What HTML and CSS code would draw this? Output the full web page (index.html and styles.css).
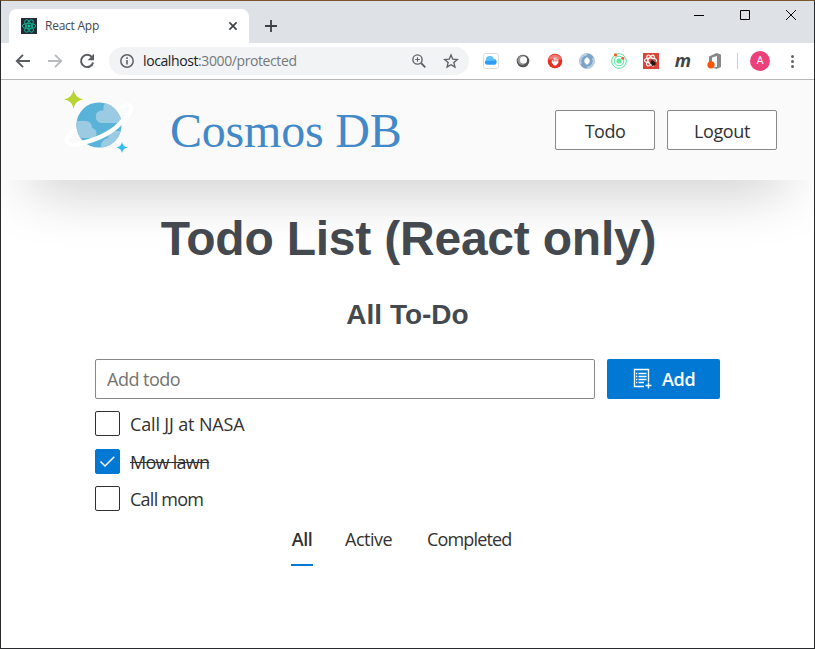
FILE: index.html
```
<!DOCTYPE html>
<html lang="en">
<head>
<meta charset="utf-8">
<title>React App</title>
<link rel="stylesheet" href="styles.css">
</head>
<body>
<div class="window">
  <div class="tabstrip">
    <div class="tab">
      <svg class="favicon" width="16" height="16" viewBox="0 0 16 16"><rect width="16" height="16" fill="#272b38"/><g fill="none" stroke="#0fae8c" stroke-width="1"><ellipse cx="8" cy="8" rx="6.8" ry="2.7"/><ellipse cx="8" cy="8" rx="6.8" ry="2.7" transform="rotate(60 8 8)"/><ellipse cx="8" cy="8" rx="6.8" ry="2.7" transform="rotate(120 8 8)"/></g><circle cx="8" cy="8" r="1.5" fill="#13c99f"/></svg>
      <span class="tab-title">React App</span>
      <svg class="tab-close" width="8" height="8" viewBox="0 0 8 8"><path d="M.4.4 7.6 7.6M7.6.4.4 7.6" stroke="#3c4043" stroke-width="1.6"/></svg>
    </div>
    <svg class="plus" width="12" height="12" viewBox="0 0 12 12"><path d="M6 0v12M0 6h12" stroke="#3c4043" stroke-width="1.8"/></svg>
    <div class="controls">
      <svg width="10" height="10" viewBox="0 0 10 10"><path d="M0 5.5h10" stroke="#000"/></svg>
      <svg width="10" height="10" viewBox="0 0 10 10"><path d="M.5.5h9v9h-9z" fill="none" stroke="#000"/></svg>
      <svg width="10" height="10" viewBox="0 0 10 10"><path d="M0 0 10 10M10 0 0 10" stroke="#000"/></svg>
    </div>
  </div>
  <div class="toolbar">
    <div class="nav">
      <svg width="16" height="16" viewBox="0 0 16 16"><path d="M15 8H2.5M8 1.8 1.8 8 8 14.2" fill="none" stroke="#5a5d61" stroke-width="1.9"/></svg>
      <svg width="16" height="16" viewBox="0 0 16 16"><path d="M1 8h12.5M8 1.8 14.2 8 8 14.2" fill="none" stroke="#b9bbbe" stroke-width="1.9"/></svg>
      <svg width="16" height="16" viewBox="0 0 16 16"><path d="M13 4.2A6.1 6.1 0 1 0 14.1 9.4" fill="none" stroke="#5a5d61" stroke-width="2"/><path d="M15 .8v6.4H8.6z" fill="#5a5d61"/></svg>
    </div>
    <div class="address">
      <svg width="14" height="14" viewBox="0 0 14 14"><circle cx="7" cy="7" r="6.2" fill="none" stroke="#5f6368" stroke-width="1.5"/><path d="M7 6v4.5M7 3.3v1.6" stroke="#5f6368" stroke-width="1.6"/></svg>
      <span class="url">localhost<span class="path">:3000/protected</span></span>
      <svg class="magnify" width="14" height="14" viewBox="0 0 14 14"><g fill="none" stroke="#5f6368"><circle cx="5.5" cy="5.5" r="4.6" stroke-width="1.4"/><path d="m9 9 4.3 4.3" stroke-width="1.8"/><path d="M5.5 3.2v4.6M3.2 5.5h4.6" stroke-width="1.1"/></g></svg>
      <svg class="star" width="14" height="14" viewBox="0 0 14 14"><path d="m7 1 1.800 4.200 4.500.4-3.400 3 1 4.400L7 10.700 3.100 13l1-4.400-3.400-3 4.500-.4z" fill="none" stroke="#5f6368" stroke-width="1.400"/></svg>
    </div>
    <div class="extensions">
      <svg width="16" height="16" viewBox="0 0 16 16"><rect x=".5" y=".5" width="15" height="15" rx="2" fill="#fff" stroke="#ddd"/><path d="M4 11.700a2.400 2.400 0 0 1-.5-4.700A3.800 3.800 0 0 1 10.800 6a3 3 0 0 1 1.300 5.700z" fill="#2d9cf5"/><path d="M3 8a3.800 3.800 0 0 1 7.800-2A3 3 0 0 1 13 7.500z" fill="#5fc3fa"/></svg>
      <svg width="16" height="16" viewBox="0 0 16 16"><circle cx="8" cy="8" r="6.300" fill="#555"/><circle cx="7.300" cy="7.200" r="4.700" fill="#999"/><circle cx="8.500" cy="7" r="3.500" fill="#fafafa"/></svg>
      <svg width="16" height="16" viewBox="0 0 16 16"><circle cx="8" cy="8" r="7.300" fill="#e53125"/><path d="M1.200 6.500a7.300 7.300 0 0 1 13.600 0z" fill="#ef7a70"/><path d="M5.300 7v3M7.200 4.500V9M9 4.500V9M10.800 6v4" stroke="#fff"/><path d="M5 8.500h6.200v1.500L9 12.500H7L5 10z" fill="#fff"/></svg>
      <svg width="16" height="16" viewBox="0 0 16 16"><circle cx="8" cy="8" r="5.200" fill="none" stroke="#7ea3c8" stroke-width="5"/><path d="M2 11A6.500 6.500 0 0 1 8 1.500M14 5a6.500 6.500 0 0 1-6 9.500" fill="none" stroke="#b9cee2" stroke-width="2"/><path d="M8 4q4.500 4 0 8-4.500-4 0-8" fill="#fff"/></svg>
      <svg width="16" height="16" viewBox="0 0 16 16"><g fill="none" stroke="#58e0a0"><circle cx="8" cy="8" r="7.300"/><circle cx="8" cy="8" r="4.800"/></g><circle cx="8" cy="8" r="2.600" fill="#61e8ab"/><circle cx="4.500" cy="1.900" r="1.600" fill="#f0602e"/><circle cx="11.800" cy="5.300" r="1.500" fill="#f0602e"/></svg>
      <svg width="16" height="16" viewBox="0 0 16 16"><rect width="16" height="16" fill="#d84438"/><g fill="none" stroke="#fff" stroke-width="1.100"><ellipse cx="7.500" cy="7.500" rx="6" ry="2.500"/><ellipse cx="7.500" cy="7.500" rx="6" ry="2.500" transform="rotate(60 7.500 7.500)"/><ellipse cx="7.500" cy="7.500" rx="6" ry="2.500" transform="rotate(120 7.500 7.500)"/></g><ellipse cx="10" cy="10" rx="2" ry="3" transform="rotate(-40 10 10)" fill="#2b1310"/><path d="m7 10 6-1M10 6v2M8.500 13l4-3" stroke="#2b1310"/></svg>
      <span class="m-icon">m</span>
      <svg width="16" height="16" viewBox="0 0 16 16"><path d="M2 3.500 9.500 0 14 1.500v12.500L9.500 16 5 14.500l5-.5V3L5 4.500V9H2z" fill="#888"/><circle cx="4" cy="11.800" r="3.600" fill="#fa5305"/></svg>
    </div>
    <div class="divider"></div>
    <div class="avatar">A</div>
    <div class="menu"><i></i><i></i><i></i></div>
  </div>
  <div class="page">
    <header class="header">
      <svg class="logo" width="70" height="66" viewBox="0 0 70 66">
        <defs><clipPath id="planet"><circle cx="35" cy="35" r="22.600"/></clipPath></defs>
        <path d="M56 17.500C65 12.500 69 15 66 22.500 60 34 42 47 22 52.500 9 56 2.500 56 3 50.500c.5-4 4-8 9.500-11.500" fill="none" stroke="#fff" stroke-width="4"/>
        <circle cx="35" cy="35" r="22.600" fill="#59b3d8"/>
        <g clip-path="url(#planet)" fill="#9bcbe3"><path d="M36.500 33a6.500 6.500 0 0 1 0-12.500h3q-1-9 8-10L61 14v19z"/><path d="M10 31h11q7 0 7 7 5 1 4.500 7-1 3-4 3H10zM37 59q-1-9 7-11 1-7 9-7h9v20z"/></g>
        <path d="M18 53C36 49 52 40 59 30" fill="none" stroke="#fff" stroke-width="4.500"/>
        <path d="M9.500-.300Q11 8 19.200 9.300 11 10.800 9.500 18.700 8.200 10.800 0 9.300 8.200 8 9.500-.300z" fill="#b8d432"/>
        <path d="M58 52q.9 4.600 5.500 5.500-4.600.9-5.500 5.500-.9-4.600-5.500-5.500 4.600-.9 5.500-5.500z" fill="#32bfee"/>
      </svg>
      <div class="brand">Cosmos DB</div>
      <div class="buttons"><button class="btn todo"><span>Todo</span></button><button class="btn logout"><span>Logout</span></button></div>
    </header>
    <main>
      <h1>Todo List (React only)</h1>
      <h2>All To-Do</h2>
      <div class="form">
        <input placeholder="Add todo">
        <button class="add"><svg width="20" height="20" viewBox="0 0 20 20"><path d="M12 17.500H2.500v-17h14V13M6.500 4.500h8M6.500 7.500h8M6.500 10.500h8M6.500 13.500H12M4 4.500h1.300M4 7.500h1.300M4 10.500h1.300M4 13.500h1.300M16.500 13.500v6M13.500 16.500h6" fill="none" stroke="#fff" stroke-width="1.400"/></svg><span>Add</span></button>
      </div>
      <ul>
        <li><i class="box"></i><span class="t1">Call JJ at NASA</span></li>
        <li><i class="box checked"><svg width="17" height="13" viewBox="0 0 17 13"><path d="m1.500 6.500 4.500 4.500L15.300 1.700" fill="none" stroke="#fff" stroke-width="1.500"/></svg></i><span class="t2">Mow lawn</span></li>
        <li><i class="box"></i><span class="t3">Call mom</span></li>
      </ul>
      <nav class="filters"><a class="active">All</a><a class="f2">Active</a><a class="f3">Completed</a></nav>
    </main>
  </div>
</div>
</body>
</html>
```
FILE: styles.css
```
* { box-sizing: border-box; }
body { margin: 0; font-family: "Open Sans", "Noto Sans", sans-serif; color: #323130; }
svg { display: block; flex: none; overflow: visible; }
button { font: inherit; padding: 0; margin: 0; color: inherit; }
.window { width: 815px; height: 649px; border: 1px solid #292a2d; border-top-color: #7b5729; background: #fff; display: flex; flex-direction: column; overflow: hidden; }
.tabstrip { height: 42px; background: #dee1e6; padding: 8px 0 0 8px; display: flex; flex: none; }
.tab { width: 240px; height: 34px; background: #fff; border-radius: 8px 8px 0 0; display: flex; align-items: center; padding: 0 12px; }
.tab-title { font-size: 12px; margin-left: 8px; color: #45484c; white-space: nowrap; letter-spacing: -.25px; padding-bottom: 1px; }
.tab-close { margin-left: auto; }
.plus { margin: 11px 0 0 16px; }
.controls { display: flex; gap: 36px; margin: 1px 18px 0 auto; }
.toolbar { height: 37px; flex: none; border-bottom: 1px solid #b7b7b7; display: flex; align-items: center; padding-left: 14px; }
.nav { display: flex; gap: 16px; width: 94px; }
.address { width: 360px; height: 28px; border-radius: 14px; background: #f1f3f4; display: flex; align-items: center; padding: 0 11px; }
.url { font-size: 14px; margin-left: 9px; color: #202124; white-space: nowrap; letter-spacing: -.4px; padding-bottom: 1px; }
.path { color: #75797e; }
.magnify { margin-left: auto; }
.star { margin-left: 18px; }
.extensions { display: flex; gap: 16px; margin-left: 14px; align-items: center; }
.m-icon { width: 16px; height: 16px; font: italic bold 18px/14px "Open Sans", sans-serif; color: #444; display: flex; justify-content: center; }
.divider { width: 1px; height: 16px; background: #ccc; margin-left: 14px; }
.avatar { width: 20px; height: 20px; border-radius: 50%; background: #ec407a; color: #fff; font: 11px/20px Roboto, sans-serif; text-align: center; margin-left: 12px; }
.menu { display: flex; flex-direction: column; gap: 2px; margin-left: 21px; }
.menu i { width: 3px; height: 3px; border-radius: 50%; background: #5f6368; }
.page { flex: 1; overflow: hidden; position: relative; }
.header { height: 100px; background: #fafafa; display: flex; padding-left: 63px; box-shadow: 0 35px 60px -30px rgba(0,0,0,.28); }
.logo { margin-top: 10px; }
.brand { font: 48px/55px "Liberation Serif", serif; color: #4489c7; margin: 23px 0 0 36px; white-space: nowrap; letter-spacing: -.2px; }
.buttons { display: flex; gap: 12px; margin: 30px 37px 0 auto; }
.btn { height: 40px; background: #fff; border: 1px solid #8a8886; border-radius: 2px; font-size: 18px; font-weight: 500; display: flex; align-items: center; justify-content: center; padding-top: 1px; }
.todo { width: 100px; letter-spacing: -.5px; }
.logout { width: 110px; letter-spacing: -.4px; }
main { position: relative; }
h1 { font: bold 48px/56px "Liberation Sans", sans-serif; color: #444950; text-align: center; margin: 31px 0 0 2px; letter-spacing: -.22px; }
h2 { font: bold 28px/34px "Liberation Sans", sans-serif; color: #444950; text-align: center; margin: 31px 0 0; }
.form { display: flex; gap: 12px; margin: 27px 0 0 94px; }
.form input { width: 500px; height: 40px; border: 1px solid #8a8886; border-radius: 2px; padding: 0 11px; font: 18px "Open Sans", sans-serif; letter-spacing: -.5px; outline: 0; }
.form input::placeholder { color: #747270; opacity: 1; }
.add { width: 113px; height: 40px; border: 0; border-radius: 2px; background: #0078d4; color: #fff; font-size: 18px; font-weight: 600; display: flex; align-items: center; padding: 0 0 0 25px; gap: 10px; letter-spacing: -.3px; }
ul { list-style: none; margin: 12px 0 0 94px; padding: 0; display: flex; flex-direction: column; gap: 12.500px; }
li { display: flex; height: 25px; align-items: center; font-size: 18px; letter-spacing: -.75px; }
.box { width: 25px; height: 25px; border: 1px solid #323130; border-radius: 2px; margin-right: 10px; display: flex; align-items: center; justify-content: center; }
.checked { background: #0078d4; border-color: #0078d4; }
.t1 { letter-spacing: -.15px; }
.t2 { text-decoration: line-through; }
li span { padding-top: 1px; }
.filters { display: flex; margin: 11px 0 0 290px; font-size: 18px; line-height: 34px; letter-spacing: -.5px; }
.filters a { height: 44px; white-space: nowrap; }
.filters .active { width: 22px; font-weight: 600; border-bottom: 2px solid #0078d4; text-align: center; }
.f2 { margin-left: 32px; width: 50px; }
.f3 { margin-left: 32px; letter-spacing: -.85px; }
```
